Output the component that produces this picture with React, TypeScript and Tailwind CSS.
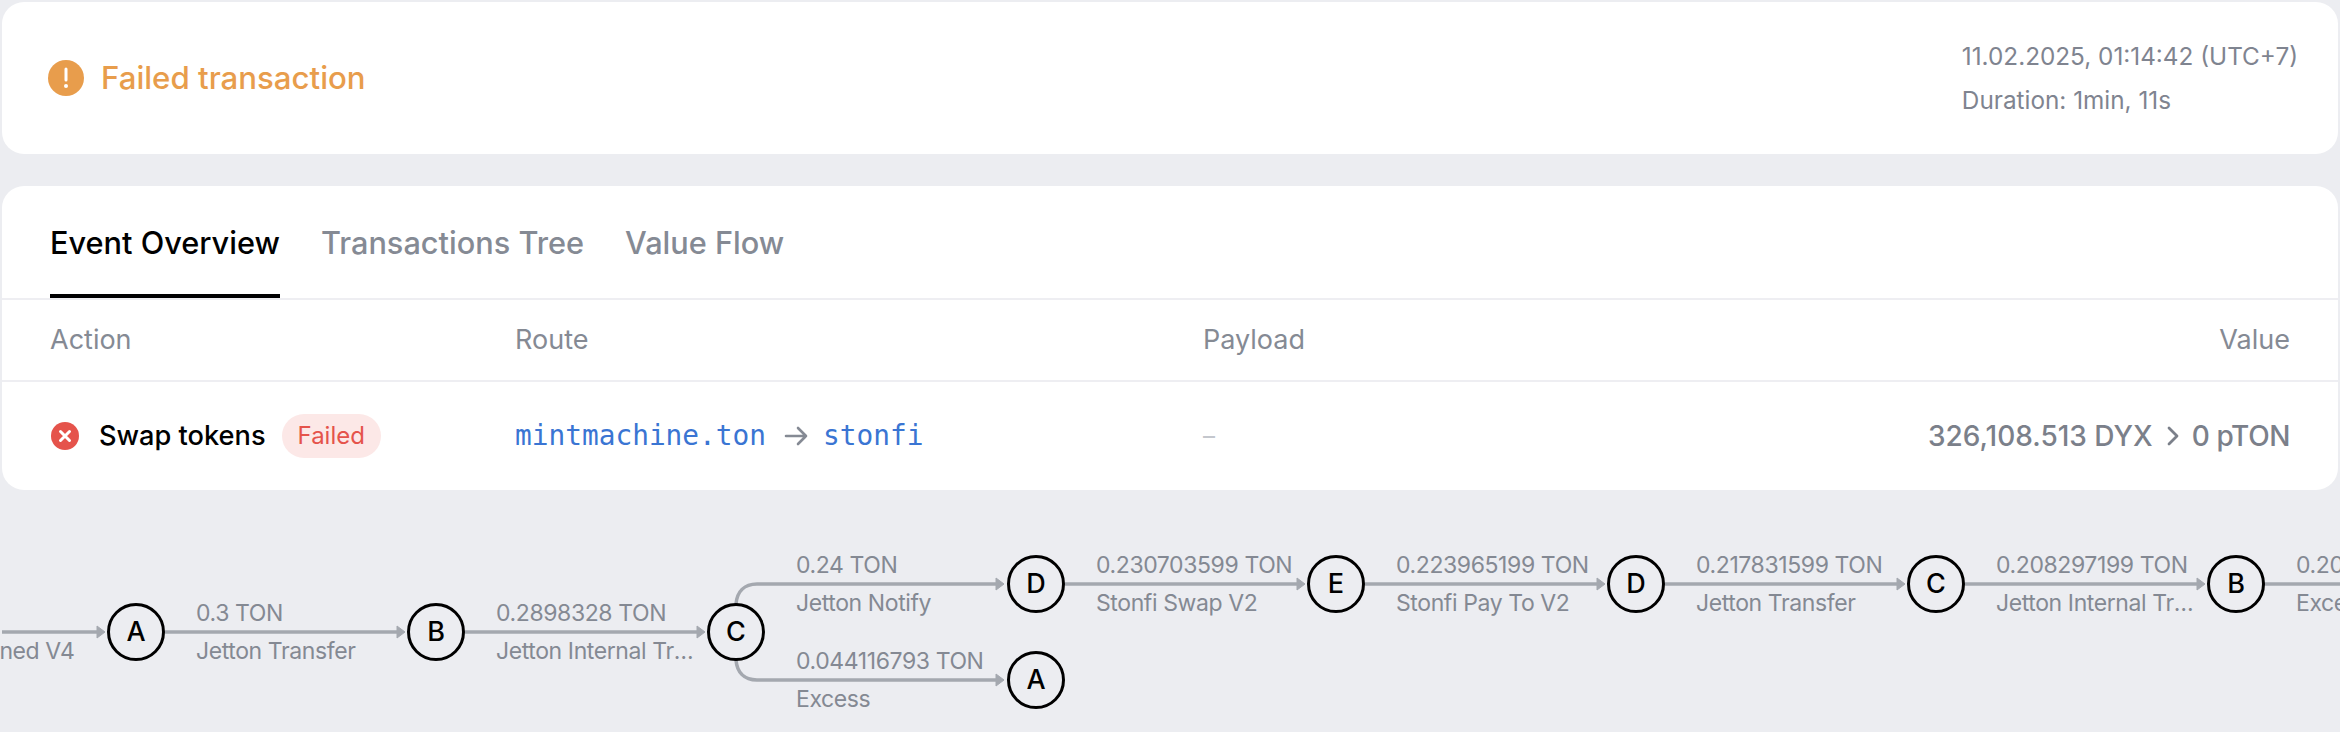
const nodes = [
  { l: "A", x: 136, y: 141 },
  { l: "B", x: 436, y: 141 },
  { l: "C", x: 736, y: 141 },
  { l: "D", x: 1036, y: 93 },
  { l: "A", x: 1036, y: 189 },
  { l: "E", x: 1336, y: 93 },
  { l: "D", x: 1636, y: 93 },
  { l: "C", x: 1936, y: 93 },
  { l: "B", x: 2236, y: 93 },
];

const labels = [
  { x: -104, y: 141, top: "", bottom: "Wallet Signed V4" },
  { x: 196, y: 141, top: "0.3 TON", bottom: "Jetton Transfer" },
  { x: 496, y: 141, top: "0.2898328 TON", bottom: "Jetton Internal Transfer" },
  { x: 796, y: 93, top: "0.24 TON", bottom: "Jetton Notify" },
  { x: 796, y: 189, top: "0.044116793 TON", bottom: "Excess" },
  { x: 1096, y: 93, top: "0.230703599 TON", bottom: "Stonfi Swap V2" },
  { x: 1396, y: 93, top: "0.223965199 TON", bottom: "Stonfi Pay To V2" },
  { x: 1696, y: 93, top: "0.217831599 TON", bottom: "Jetton Transfer" },
  { x: 1996, y: 93, top: "0.208297199 TON", bottom: "Jetton Internal Transfer" },
  { x: 2296, y: 93, top: "0.205 TON", bottom: "Excess" },
];

const straight = [
  [2, 141, 105],
  [165, 141, 405],
  [465, 141, 705],
  [1065, 93, 1305],
  [1365, 93, 1605],
  [1665, 93, 1905],
  [1965, 93, 2205],
];

function Arrow({ x, y }: { x: number; y: number }) {
  return <path d={`M${x - 8} ${y - 6}L${x} ${y}L${x - 8} ${y + 6}Z`} fill="#a4a8af" stroke="#a4a8af" strokeWidth="1" strokeLinejoin="round" />;
}

function Flow() {
  return (
    <div className="relative mt-[1px] h-[241px] overflow-hidden">
      <svg className="absolute left-0 top-0" width="2340" height="241" fill="none">
        {straight.map(([a, y, b]) => (
          <g key={a}>
            <path d={`M${a} ${y}H${b - 4}`} stroke="#a4a8af" strokeWidth="3.5" />
            <Arrow x={b} y={y} />
          </g>
        ))}
        <path d="M2236 93H2340" stroke="#a4a8af" strokeWidth="3.5" />
        <path d="M736 113C737 101 744 93 757 93H1000" stroke="#a4a8af" strokeWidth="3.5" />
        <Arrow x={1004} y={93} />
        <path d="M736 169C737 181 744 189 757 189H1000" stroke="#a4a8af" strokeWidth="3.5" />
        <Arrow x={1004} y={189} />
      </svg>
      {labels.map((e) => (
        <div key={e.x + "-" + e.y} className="absolute w-[198px] text-[23px] leading-[38px] tracking-[-0.4px] text-[#848993]" style={{ left: e.x, top: e.y - 38 }}>
          <div className="h-[38px] truncate">{e.top}</div>
          <div className="h-[38px] truncate">{e.bottom}</div>
        </div>
      ))}
      {nodes.map((n) => (
        <div
          key={n.l + n.x}
          className="absolute flex h-[58px] w-[58px] -translate-x-1/2 -translate-y-1/2 items-center justify-center rounded-full border-[3px] border-black bg-[#ecedf1] text-[27px] font-medium text-black"
          style={{ left: n.x, top: n.y }}
        >
          {n.l}
        </div>
      ))}
    </div>
  );
}

export default function App() {
  return (
    <div className="flex h-[732px] w-full flex-col overflow-hidden bg-[#ecedf1] font-['Inter',sans-serif]">
      <div className="mx-[2px] mt-[2px] flex h-[152px] items-center justify-between rounded-[22px] bg-white pl-[46px] pr-[40px]">
        <div className="flex items-center gap-[17px]">
          <svg width="36" height="36" viewBox="0 0 36 36">
            <circle cx="18" cy="18" r="18" fill="#e89d4c" />
            <path d="M18 9V20" stroke="#fff" strokeWidth="3" strokeLinecap="round" />
            <circle cx="18" cy="26" r="2" fill="#fff" />
          </svg>
          <span className="text-[31.2px] font-medium text-[#e89d4c]">Failed transaction</span>
        </div>
        <div className="flex flex-col gap-[12px] text-[24.3px] leading-[32px] text-[#7f8490]">
          <div>11.02.2025, 01:14:42 (UTC+7)</div>
          <div>Duration: 1min, 11s</div>
        </div>
      </div>

      <div className="mx-[2px] mt-[32px] h-[304px] rounded-[22px] bg-white">
        <div className="flex h-[114px] gap-[41px] border-b-2 border-[#eeeef2] pl-[48px]">
          <div className="flex h-[112px] items-center border-b-4 border-black pt-[6px] text-[30.7px] font-medium text-black">Event Overview</div>
          <div className="flex items-center pt-[2px] text-[30.7px] font-medium text-[#858a94]">Transactions Tree</div>
          <div className="flex items-center pt-[2px] text-[30.7px] font-medium text-[#858a94]">Value Flow</div>
        </div>
        <div className="grid h-[82px] grid-cols-[465px_688px_1fr_auto] items-center border-b-2 border-[#eeeef2] pl-[48px] pr-[48px] text-[27px] text-[#858a94]">
          <div>Action</div>
          <div>Route</div>
          <div>Payload</div>
          <div>Value</div>
        </div>
        <div className="grid h-[108px] grid-cols-[464px_688px_1fr_auto] items-center pl-[49px] pr-[48px]">
          <div className="flex items-center">
            <svg width="28" height="28" viewBox="0 0 28 28">
              <circle cx="14" cy="14" r="14" fill="#e5534b" />
              <path d="M9.5 9.5L18.5 18.5M18.5 9.5L9.5 18.5" stroke="#fff" strokeWidth="3" strokeLinecap="round" />
            </svg>
            <span className="ml-[20px] text-[27.2px] font-medium text-black">Swap tokens</span>
            <span className="ml-[16px] flex h-[44px] items-center rounded-full bg-[#fce8e7] px-[16px] text-[24px] text-[#e5534b]">Failed</span>
          </div>
          <div className="flex items-center font-['DejaVu_Sans_Mono',monospace] text-[27.8px] text-[#3a75d3]">
            <span>mintmachine.ton</span>
            <svg className="ml-[18px] mr-[15px]" width="24" height="22" viewBox="0 0 24 22" fill="none" stroke="#858a94" strokeWidth="2.6" strokeLinecap="round" strokeLinejoin="round">
              <path d="M2 11H22M14 3L22 11L14 19" />
            </svg>
            <span>stonfi</span>
          </div>
          <div className="text-[24px] text-[#c4c7cd]">–</div>
          <div className="flex items-center text-[28px] font-medium text-[#7b808a]">
            <span>326,108.513 DYX</span>
            <svg className="ml-[13px] mr-[12px]" width="14" height="22" viewBox="0 0 14 22" fill="none" stroke="#7b808a" strokeWidth="2.8" strokeLinecap="round" strokeLinejoin="round">
              <path d="M3 3L11 11L3 19" />
            </svg>
            <span className="tracking-[-0.4px]">0 pTON</span>
          </div>
        </div>
      </div>
      <Flow />
    </div>
  );
}
